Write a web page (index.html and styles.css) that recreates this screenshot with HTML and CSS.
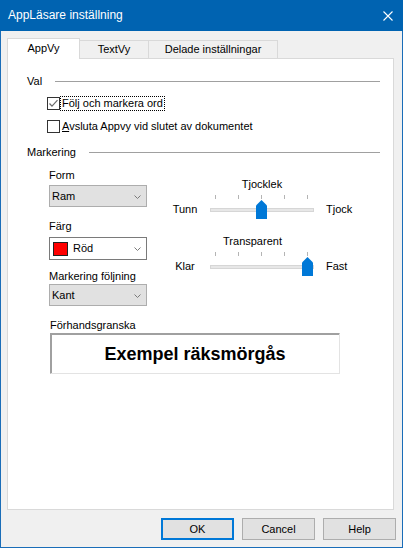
FILE: index.html
```html
<!DOCTYPE html>
<html lang="sv">
<head>
<meta charset="utf-8">
<title>AppLäsare inställning</title>
<link rel="stylesheet" href="styles.css">
</head>
<body>
<div class="window">
  <div class="titlebar">
    <span class="title">AppLäsare inställning</span>
    <svg class="close" width="10" height="10" viewBox="0 0 10 10"><path d="M0.5 0.5 L9.5 9.5 M9.5 0.5 L0.5 9.5" stroke="#ffffff" stroke-width="1.1" fill="none"/></svg>
  </div>
  <div class="client">
    <div class="tabs">
      <div class="tab tab-active">AppVy</div>
      <div class="tab tab-text">TextVy</div>
      <div class="tab tab-shared">Delade inställningar</div>
    </div>
    <div class="panel">
      <div class="group-head"><span>Val</span><span class="rule"></span></div>
      <div class="check check-first">
        <span class="box"><svg width="11" height="11" viewBox="0 0 11 11"><polyline points="1.5,5.5 4,8.2 9.5,2.2" fill="none" stroke="#6a6a6a" stroke-width="1.2"/></svg></span>
        <span class="check-label focus">Följ och markera ord</span>
      </div>
      <div class="check check-second">
        <span class="box"></span>
        <span class="check-label"><u>A</u>vsluta Appvy vid slutet av dokumentet</span>
      </div>
      <div class="group-head group-mark"><span>Markering</span><span class="rule"></span></div>
      <div class="mark">
        <div class="fields">
          <div class="field-label">Form</div>
          <div class="select select-form"><span class="select-text">Ram</span><svg class="chev" width="7" height="4" viewBox="0 0 7 4"><polyline points="0.5,0.5 3.5,3.5 6.5,0.5" fill="none" stroke="#7a7a7a" stroke-width="1"/></svg></div>
          <div class="field-label label-color">Färg</div>
          <div class="select select-color"><span class="swatch"></span><span class="select-text">Röd</span><svg class="chev" width="7" height="4" viewBox="0 0 7 4"><polyline points="0.5,0.5 3.5,3.5 6.5,0.5" fill="none" stroke="#7a7a7a" stroke-width="1"/></svg></div>
          <div class="field-label label-follow">Markering följning</div>
          <div class="select select-follow"><span class="select-text">Kant</span><svg class="chev" width="7" height="4" viewBox="0 0 7 4"><polyline points="0.5,0.5 3.5,3.5 6.5,0.5" fill="none" stroke="#7a7a7a" stroke-width="1"/></svg></div>
        </div>
        <div class="sliders">
          <div class="slider">
            <div class="slider-title">Tjocklek</div>
            <div class="ticks"><span></span><span></span><span></span><span></span><span></span></div>
            <div class="slider-row">
              <span class="end-min">Tunn</span>
              <div class="track-wrap">
                <div class="track"></div>
                <svg class="thumb thumb-mid" width="11" height="19" viewBox="0 0 11 19"><polygon points="0,5.5 5.5,0 11,5.5 11,19 0,19" fill="#0078d7"/></svg>
              </div>
              <span class="end-max">Tjock</span>
            </div>
          </div>
          <div class="slider slider-second">
            <div class="slider-title title-shift">Transparent</div>
            <div class="ticks"><span></span><span></span><span></span><span></span><span></span></div>
            <div class="slider-row">
              <span class="end-min">Klar</span>
              <div class="track-wrap">
                <div class="track"></div>
                <svg class="thumb thumb-max" width="11" height="19" viewBox="0 0 11 19"><polygon points="0,5.5 5.5,0 11,5.5 11,19 0,19" fill="#0078d7"/></svg>
              </div>
              <span class="end-max">Fast</span>
            </div>
          </div>
        </div>
      </div>
      <div class="preview-label">Förhandsgranska</div>
      <div class="preview">Exempel räksmörgås</div>
    </div>
    <div class="buttons">
      <div class="btn btn-default">OK</div>
      <div class="btn">Cancel</div>
      <div class="btn">Help</div>
    </div>
  </div>
</div>
</body>
</html>
```

FILE: styles.css
```css
* { box-sizing: border-box; }
html, body { margin: 0; padding: 0; }
body {
  width: 403px;
  height: 548px;
  overflow: hidden;
  font-family: "Liberation Sans", Arial, sans-serif;
  font-size: 11px;
  color: #000;
  background: #f0f0f0;
}
.window {
  width: 403px;
  height: 548px;
  background: #f0f0f0;
  border: 1px solid #1a6db8;
  border-top: none;
  display: flex;
  flex-direction: column;
}
.titlebar {
  height: 31px;
  margin: 0 -1px;
  background: #0063b1;
  display: flex;
  align-items: center;
  justify-content: space-between;
  padding: 0 10px 0 8px;
}
.title {
  color: #fff;
  font-size: 12px;
  line-height: 14px;
  margin-top: -1px;
}
.close { display: block; margin-top: 1px; }
.client {
  flex: 1;
  padding: 7px 8px 0 6px;
}
.tabs {
  display: flex;
  height: 21px;
  margin-bottom: -1px;
}
.tab {
  border: 1px solid #d9d9d9;
  border-bottom: none;
  text-align: center;
  white-space: nowrap;
}
.tab-active {
  width: 73px;
  height: 21px;
  line-height: 19px;
  background: #fff;
  position: relative;
  z-index: 1;
}
.tab-text, .tab-shared {
  margin-top: 2px;
  height: 18px;
  line-height: 17px;
  background: #f0f0f0;
  border-left: none;
}
.tab-text { width: 69px; }
.tab-shared { width: 129px; }
.panel {
  height: 452px;
  background: #fff;
  border: 1px solid #d9d9d9;
  padding: 16px 13px 0 19px;
}
.group-head {
  display: flex;
  align-items: center;
  height: 13px;
  line-height: 13px;
}
.rule {
  flex: 1;
  height: 1px;
  background: #a0a0a0;
  margin-left: 13px;
  margin-top: -1px;
}
.group-mark { margin-top: 13px; }
.check {
  display: flex;
  align-items: center;
  height: 13px;
  margin-left: 20px;
}
.check-first { margin-top: 9px; }
.check-second { margin-top: 10px; }
.box {
  width: 13px;
  height: 13px;
  border: 1px solid #333;
  background: #fff;
  flex: none;
  display: flex;
  align-items: center;
  justify-content: center;
}
.box svg { display: block; }
.check-label {
  margin-left: 1px;
  padding: 0 1px;
  line-height: 13px;
  white-space: nowrap;
}
.focus { outline: 1px dotted #000; outline-offset: 0; }
.mark {
  display: flex;
  margin-top: 10px;
  margin-left: 22px;
}
.fields { width: 98px; flex: none; }
.field-label { height: 13px; line-height: 13px; }
.label-color { margin-top: 13px; }
.label-follow { margin-top: 10px; }
.select {
  width: 98px;
  height: 22px;
  border: 1px solid #adadad;
  background: #e1e1e1;
  display: flex;
  align-items: center;
  padding: 0 5px 0 2px;
  margin-top: 3px;
}
.select-color {
  height: 23px;
  margin-top: 4px;
  background: #fff;
  border-color: #7a7a7a;
  padding-left: 3px;
}
.select-follow { margin-top: 1px; }
.select-text { flex: 1; line-height: 13px; }
.chev { display: block; flex: none; margin-top: 1px; }
.swatch {
  width: 15px;
  height: 14px;
  background: #ff0000;
  border: 1px solid #222;
  margin-right: 5px;
  flex: none;
}
.sliders {
  margin-left: 23px;
  margin-top: 9px;
}
.slider-second { margin-top: 16px; }
.slider-title {
  margin-left: 34px;
  width: 116px;
  text-align: center;
  height: 13px;
  line-height: 13px;
}
.title-shift { padding-right: 19px; }
.ticks {
  margin-left: 34px;
  width: 116px;
  height: 4px;
  margin-top: 4px;
  padding: 0 12px 0 11px;
  display: flex;
  justify-content: space-between;
}
.ticks span {
  width: 1px;
  height: 4px;
  background: #b4b4b4;
}
.slider-row {
  display: flex;
  align-items: center;
  height: 19px;
  margin-top: 1px;
}
.end-min {
  width: 30px;
  margin-right: 4px;
  text-align: center;
  line-height: 13px;
}
.end-max {
  margin-left: 6px;
  line-height: 13px;
}
.track-wrap {
  position: relative;
  width: 116px;
  height: 19px;
}
.track {
  margin: 8px 6px 0 6px;
  height: 4px;
  background: #e7e7e7;
  border: 1px solid #d6d6d6;
}
.thumb { position: absolute; top: 0; display: block; }
.thumb-mid { left: 52px; }
.thumb-max { left: 98px; }
.preview-label {
  margin-top: 13px;
  margin-left: 23px;
  height: 13px;
  line-height: 13px;
}
.preview {
  margin-top: 1px;
  margin-left: 23px;
  width: 290px;
  height: 41px;
  border: 1px solid;
  border-color: #a0a0a0 #e3e3e3 #e3e3e3 #a0a0a0;
  box-shadow: inset 1px 1px 0 #a0a0a0;
  display: flex;
  align-items: center;
  justify-content: center;
  font-weight: bold;
  font-size: 18px;
  padding-top: 1px;
}
.buttons {
  display: flex;
  justify-content: flex-end;
  gap: 8px;
  margin-top: 8px;
  margin-right: -2px;
}
.btn {
  width: 73px;
  height: 22px;
  border: 1px solid #adadad;
  background: #e1e1e1;
  text-align: center;
  line-height: 20px;
}
.btn-default {
  border-color: #0078d7;
  box-shadow: inset 0 0 0 1px #0078d7;
}
```
